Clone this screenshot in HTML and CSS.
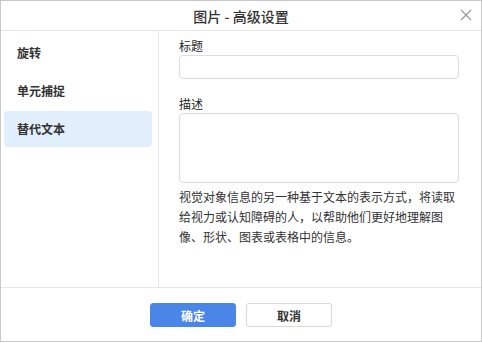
FILE: index.html
```html
<!DOCTYPE html>
<html lang="zh-CN">
<head>
<meta charset="utf-8">
<title>图片 - 高级设置</title>
<link rel="stylesheet" href="styles.css">
</head>
<body>
<div class="dialog">
  <div class="header">
    <div class="title">图片 - 高级设置</div>
    <button class="close" aria-label="关闭">
      <svg width="12" height="12" viewBox="0 0 12 12"><path d="M1 1 L11 11 M11 1 L1 11" stroke="#9a9a9a" stroke-width="1.2" fill="none"/></svg>
    </button>
  </div>
  <div class="main">
    <div class="sidebar">
      <div class="nav-item">旋转</div>
      <div class="nav-item">单元捕捉</div>
      <div class="nav-item active">替代文本</div>
    </div>
    <div class="content">
      <div class="label">标题</div>
      <div class="input"></div>
      <div class="label label-gap">描述</div>
      <div class="textarea"></div>
      <p class="desc">视觉对象信息的另一种基于文本的表示方式，将读取给视力或认知障碍的人，以帮助他们更好地理解图像、形状、图表或表格中的信息。</p>
    </div>
  </div>
  <div class="footer">
    <button class="btn primary">确定</button>
    <button class="btn">取消</button>
  </div>
</div>
</body>
</html>
```
FILE: styles.css
```css
* { box-sizing: border-box; }
html, body { margin: 0; padding: 0; background: #fff; }
body {
  font-family: "Noto Sans CJK SC", "Noto Sans", sans-serif;
  color: #333;
}
.dialog {
  width: 482px;
  height: 342px;
  border: 1px solid #c8c8c8;
  display: flex;
  flex-direction: column;
  background: #fff;
}
.header {
  height: 30px;
  border-bottom: 1px solid #e6e6e6;
  display: flex;
  align-items: center;
  justify-content: center;
  position: relative;
}
.title {
  font-size: 14px;
  font-weight: 500;
  color: #333;
  line-height: 20px;
}
.close {
  position: absolute;
  right: 9px;
  top: 8px;
  width: 12px;
  height: 12px;
  padding: 0;
  border: none;
  background: none;
  display: flex;
}
.main {
  height: 257px;
  display: flex;
  border-bottom: 1px solid #e6e6e6;
}
.sidebar {
  width: 158px;
  border-right: 1px solid #e6e6e6;
  padding: 4px 6px 0 3px;
  display: flex;
  flex-direction: column;
  gap: 2px;
}
.nav-item {
  height: 36px;
  line-height: 36px;
  padding-left: 13px;
  font-size: 12px;
  font-weight: 700;
  color: #333;
  border-radius: 4px;
}
.nav-item.active { background: #e1eefc; }
.content {
  flex: 1;
  padding: 7px 22px 0 20px;
}
.label {
  font-size: 12px;
  line-height: 16px;
  margin-bottom: 1px;
  color: #262626;
}
.label-gap { margin-top: 17px; }
.input {
  height: 24px;
  border: 1px solid #dcdcdc;
  border-radius: 4px;
}
.textarea {
  height: 70px;
  border: 1px solid #dcdcdc;
  border-radius: 4px;
}
.desc {
  margin: 4px 0 0 0;
  font-size: 12px;
  line-height: 20px;
  color: #333;
}
.footer {
  flex: 1;
  display: flex;
  justify-content: center;
  gap: 10px;
  padding-top: 15px;
}
.btn {
  width: 86px;
  height: 24px;
  border: 1px solid #d9d9d9;
  border-radius: 3px;
  background: #fff;
  font-family: inherit;
  font-size: 12px;
  font-weight: 700;
  color: #333;
  padding: 0;
}
.btn.primary {
  background: #4a86e8;
  border-color: #4a86e8;
  color: #fff;
}
```
